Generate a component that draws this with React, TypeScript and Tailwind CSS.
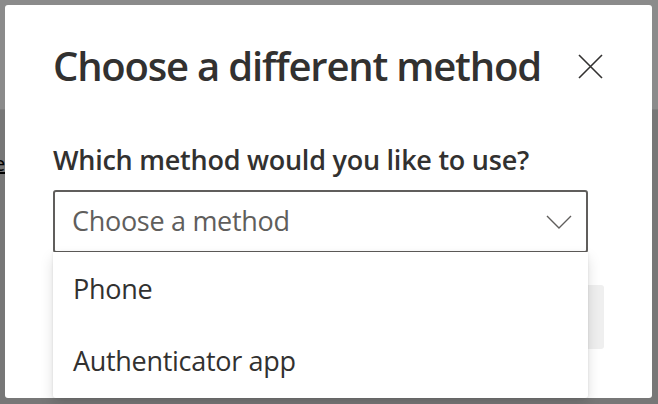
import React from 'react';

const font = { fontFamily: '"Open Sans", "Noto Sans", sans-serif' };

export default function App() {
  return (
    <div className="relative w-[658px] h-[404px] overflow-hidden bg-[#777777]" style={font}>
      {/* page behind the overlay */}
      <div className="h-[110px] bg-[#8b8b8b] border-b border-[#7f7f7f]" />
      <div className="pt-[44px] pl-0 text-[20px] leading-[20px] text-black">
        <span className="underline -ml-[6px]">e</span>
      </div>

      {/* dialog */}
      <div className="absolute left-[5px] top-[5px] w-[647px] h-[393px] bg-white rounded-[3px] pl-[48px] pr-[48px] pt-[33px]">
        <div className="flex items-start justify-between">
          <h1 className="text-[40px] leading-[56px] font-semibold text-[#323130] tracking-[-1.2px] whitespace-nowrap">
            Choose a different method
          </h1>
          <button className="mt-[16px] mr-[1px] w-[25px] h-[25px] flex items-center justify-center text-[#323130]">
            <svg width="25" height="25" viewBox="0 0 25 25" fill="none" stroke="currentColor" strokeWidth="1.6">
              <path d="M1 1 L24 24 M24 1 L1 24" />
            </svg>
          </button>
        </div>

        <div className="mt-[48px] text-[27px] leading-[36px] font-semibold text-[#323130] tracking-[-0.25px] whitespace-nowrap">
          Which method would you like to use?
        </div>

        <div className="relative mt-[12px] w-[535px]">
          <div className="h-[63px] border-2 border-[#605e5c] rounded-[3px] flex items-center justify-between pl-[17px] pr-[14px]">
            <span className="text-[27px] text-[#605e5c] tracking-[-0.3px]">Choose a method</span>
            <svg width="26" height="14" viewBox="0 0 26 14" fill="none" stroke="#605e5c" strokeWidth="1.4">
              <path d="M1 1 L13 13 L25 1" />
            </svg>
          </div>

          {/* button partly hidden by the open list */}
          <div className="absolute left-[440px] top-[95px] w-[111px] h-[64px] rounded-[3px] bg-[#efefef]" />

          {/* open list */}
          <div className="absolute left-0 top-[62px] w-[535px] bg-white rounded-b-[3px] shadow-[0_6px_14px_rgba(0,0,0,0.13),0_0_3px_rgba(0,0,0,0.11)] py-[1px]">
            <div className="h-[72px] flex items-center pl-[20px] text-[27px] text-[#323130] tracking-[-0.3px]">Phone</div>
            <div className="h-[72px] flex items-center pl-[20px] text-[27px] text-[#323130] tracking-[-0.3px]">Authenticator app</div>
          </div>
        </div>
      </div>
    </div>
  );
}
